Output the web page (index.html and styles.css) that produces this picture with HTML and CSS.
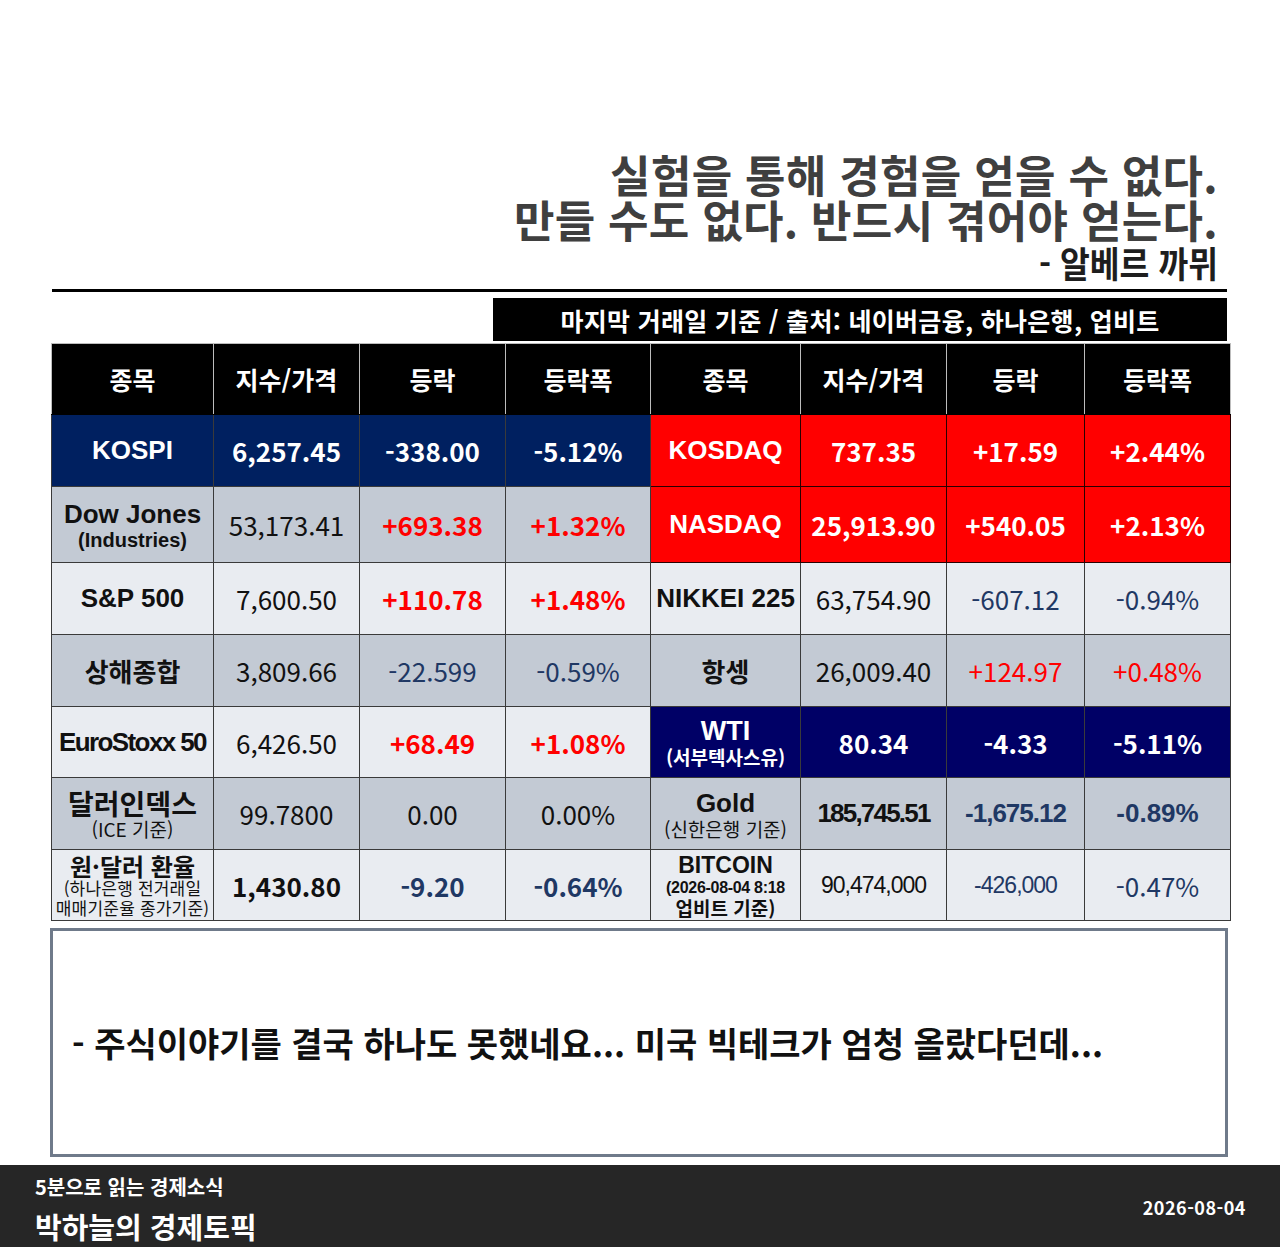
FILE: index.html
```html
<!DOCTYPE html>
<html lang="ko">
<head>
<meta charset="utf-8">
<title>박하늘의 경제토픽</title>
<link rel="stylesheet" href="styles.css">
</head>
<body>
<div class="main">
  <div class="quote">
    <div class="q">실험을 통해 경험을 얻을 수 없다.</div>
    <div class="q">만들 수도 없다. 반드시 겪어야 얻는다.</div>
    <div class="q author">- 알베르 까뮈</div>
  </div>
  <div class="rule"></div>
  <div class="source-row">
    <div class="source"><span class="source-text">마지막 거래일 기준 / 출처: 네이버금융, 하나은행, 업비트</span></div>
  </div>
  <table class="market">
    <colgroup>
      <col class="c1"><col class="c2"><col class="c3"><col class="c4">
      <col class="c5"><col class="c6"><col class="c7"><col class="c8">
    </colgroup>
    <thead>
      <tr class="r-head">
        <th>종목</th><th>지수/가격</th><th>등락</th><th>등락폭</th>
        <th>종목</th><th>지수/가격</th><th>등락</th><th>등락폭</th>
      </tr>
    </thead>
    <tbody>
      <tr class="r72">
        <td class="navy name-en">KOSPI</td>
        <td class="navy num b">6,257.45</td>
        <td class="navy num b">-338.00</td>
        <td class="navy num b">-5.12%</td>
        <td class="red name-en">KOSDAQ</td>
        <td class="red num b">737.35</td>
        <td class="red num b">+17.59</td>
        <td class="red num b">+2.44%</td>
      </tr>
      <tr class="r76">
        <td class="gray name-en"><div class="l1">Dow Jones</div><div class="l2 en-sub">(Industries)</div></td>
        <td class="gray num">53,173.41</td>
        <td class="gray num b up">+693.38</td>
        <td class="gray num b up">+1.32%</td>
        <td class="red name-en">NASDAQ</td>
        <td class="red num b">25,913.90</td>
        <td class="red num b">+540.05</td>
        <td class="red num b">+2.13%</td>
      </tr>
      <tr class="r72">
        <td class="light name-en">S&amp;P 500</td>
        <td class="light num">7,600.50</td>
        <td class="light num b up">+110.78</td>
        <td class="light num b up">+1.48%</td>
        <td class="light name-en">NIKKEI 225</td>
        <td class="light num">63,754.90</td>
        <td class="light num down">-607.12</td>
        <td class="light num down">-0.94%</td>
      </tr>
      <tr class="r72">
        <td class="gray name-ko">상해종합</td>
        <td class="gray num">3,809.66</td>
        <td class="gray num down">-22.599</td>
        <td class="gray num down">-0.59%</td>
        <td class="gray name-ko">항셍</td>
        <td class="gray num">26,009.40</td>
        <td class="gray num up">+124.97</td>
        <td class="gray num up">+0.48%</td>
      </tr>
      <tr class="r71">
        <td class="light name-en narrow">EuroStoxx 50</td>
        <td class="light num">6,426.50</td>
        <td class="light num b up">+68.49</td>
        <td class="light num b up">+1.08%</td>
        <td class="navy2 name-en"><div class="l1 wti">WTI</div><div class="l2 ko-sub b">(서부텍사스유)</div></td>
        <td class="navy2 num b">80.34</td>
        <td class="navy2 num b">-4.33</td>
        <td class="navy2 num b">-5.11%</td>
      </tr>
      <tr class="r72">
        <td class="gray"><div class="l1 name-ko big">달러인덱스</div><div class="l2 ko-sub small">(ICE 기준)</div></td>
        <td class="gray num">99.7800</td>
        <td class="gray num">0.00</td>
        <td class="gray num">0.00%</td>
        <td class="gray"><div class="l1 name-en">Gold</div><div class="l2 ko-sub">(신한은행 기준)</div></td>
        <td class="gray arial b cond2">185,745.51</td>
        <td class="gray arial b cond1 down">-1,675.12</td>
        <td class="gray arial b down">-0.89%</td>
      </tr>
      <tr class="r71">
        <td class="light"><div class="m1 name-ko">원·달러 환율</div><div class="m2">(하나은행 전거래일</div><div class="m3">매매기준율 종가기준)</div></td>
        <td class="light num b">1,430.80</td>
        <td class="light num b down">-9.20</td>
        <td class="light num b down">-0.64%</td>
        <td class="light"><div class="m1 btc">BITCOIN</div><div class="m2 btc-date">(2026-08-04 8:18</div><div class="m3 btc-src">업비트 기준)</div></td>
        <td class="light arial-r">90,474,000</td>
        <td class="light arial-r down">-426,000</td>
        <td class="light num down">-0.47%</td>
      </tr>
    </tbody>
  </table>
  <div class="memo">
    <p class="memo-text">- 주식이야기를 결국 하나도 못했네요... 미국 빅테크가 엄청 올랐다던데...</p>
  </div>
</div>
<footer class="footer">
  <div class="brand">
    <div class="brand-sub">5분으로 읽는 경제소식</div>
    <div class="brand-title">박하늘의 경제토픽</div>
  </div>
  <div class="date">2026-08-04</div>
</footer>
</body>
</html>
```
FILE: styles.css
```css
* { box-sizing: border-box; }
html, body { margin: 0; padding: 0; }
body {
  width: 1280px;
  height: 1247px;
  background: #ffffff;
  font-family: "Noto Sans CJK KR", "Noto Sans", sans-serif;
  color: #111;
  overflow: hidden;
}

.main {
  padding-left: 51px;
  width: 1230px;
}

/* Quote */
.quote {
  display: flex;
  flex-direction: column;
  align-items: flex-end;
  padding-top: 152px;
  padding-right: 12px;
}
.q {
  font-size: 44px;
  line-height: 45px;
  height: 45px;
  font-weight: 700;
  color: #3f3f3f;
  white-space: nowrap;
  letter-spacing: 0.3px;
}
.q.author {
  font-size: 36px;
  line-height: 40px;
  height: 40px;
  color: #1e1e1e;
  letter-spacing: 0;
  transform: scaleX(0.9);
  transform-origin: right center;
}

.rule {
  margin-top: 7px;
  margin-left: 1px;
  width: 1175px;
  height: 3px;
  background: #000;
}

.source-row {
  margin-top: 6px;
  padding-left: 442px;
}
.source {
  width: 734px;
  height: 43px;
  background: #000;
  display: flex;
  align-items: center;
  justify-content: center;
}
.source-text {
  display: inline-block;
  color: #fff;
  font-size: 25px;
  font-weight: 700;
  white-space: nowrap;
  letter-spacing: 0.3px;
}

/* Table */
.market {
  width: 1179px;
  table-layout: fixed;
  border-collapse: collapse;
  margin: 2px 0 0 0;
}
.c1 { width: 162px; }
.c2 { width: 146px; }
.c3 { width: 146px; }
.c4 { width: 145px; }
.c5 { width: 150px; }
.c6 { width: 146px; }
.c7 { width: 138px; }
.c8 { width: 146px; }

.market th,
.market td {
  padding: 0;
  text-align: center;
  vertical-align: middle;
  white-space: nowrap;
  overflow: visible;
  border: 1px solid #3a3a3a;
}
.market th {
  background: #000;
  color: #fff;
  font-size: 25px;
  font-weight: 700;
  border-color: #bdbdbd;
  border-bottom-color: #000;
}
.r-head { height: 71px; }
.r71 { height: 71px; }
.r72 { height: 72px; }
.r76 { height: 76px; }

.navy { background: #002060; color: #fff; }
.navy2 { background: #000066; color: #fff; }
.red { background: #ff0000; color: #fff; }
.gray { background: #c3cad4; }
.light { background: #e9ecf1; }
.market td.red { border-color: #2a0000; }

.num {
  font-size: 26px;
  font-weight: 400;
  letter-spacing: 0;
}
.b { font-weight: 700; }
.up { color: #ff0000; }
.down { color: #1f3864; }

.name-en {
  font-family: "Liberation Sans", Arial, sans-serif;
  font-size: 26px;
  font-weight: 700;
}
.name-en.narrow { letter-spacing: -1.6px; }
.name-ko {
  font-family: "Noto Sans CJK KR", sans-serif;
  font-size: 26px;
  font-weight: 700;
}
.name-ko.big { font-size: 28px; }

.arial {
  font-family: "Liberation Sans", Arial, sans-serif;
  font-size: 26px;
}
.cond2 { letter-spacing: -1.8px; }
.cond1 { letter-spacing: -1px; }
.arial-r {
  font-family: "Liberation Sans", Arial, sans-serif;
  font-size: 23px;
  letter-spacing: -1px;
}

.l1 { line-height: 30px; height: 30px; }
.l2 { line-height: 22px; height: 22px; }
.en-sub {
  font-family: "Liberation Sans", Arial, sans-serif;
  font-size: 20px;
  font-weight: 700;
}
.ko-sub {
  font-family: "Noto Sans CJK KR", sans-serif;
  font-size: 19px;
  font-weight: 400;
}
.ko-sub.b { font-weight: 700; font-size: 19px; }
.ko-sub.small { font-size: 19px; }
.wti { font-size: 27px; }

.m1 { line-height: 25px; height: 25px; font-size: 24px; }
.m2, .m3 {
  line-height: 20px;
  height: 20px;
  font-size: 17px;
  letter-spacing: 0.2px;
  font-family: "Noto Sans CJK KR", sans-serif;
}
.btc {
  font-family: "Liberation Sans", Arial, sans-serif;
  font-size: 23px;
  font-weight: 700;
}
.btc-date {
  font-family: "Liberation Sans", Arial, sans-serif;
  font-size: 16px;
  font-weight: 700;
  letter-spacing: -0.3px;
}
.btc-src {
  font-size: 19px;
  font-weight: 700;
  letter-spacing: 0;
}

/* Memo */
.memo {
  margin-top: 7px;
  margin-left: -1px;
  width: 1178px;
  height: 229px;
  border: 3px solid #6f7a8a;
  display: flex;
  align-items: center;
  padding-left: 19px;
}
.memo-text {
  margin: 0;
  font-size: 34px;
  font-weight: 700;
  color: #111;
  white-space: nowrap;
}

/* Footer */
.footer {
  margin-top: 8px;
  height: 83px;
  background: #262626;
  color: #fff;
  display: flex;
  justify-content: space-between;
  align-items: center;
  padding: 0 34px 0 35px;
}
.brand {
  display: flex;
  flex-direction: column;
  align-self: flex-start;
  padding-top: 9px;
}
.brand-sub {
  font-size: 20px;
  line-height: 26px;
  font-weight: 700;
}
.brand-title {
  margin-top: 7px;
  font-size: 29px;
  line-height: 38px;
  font-weight: 700;
}
.date {
  font-size: 18px;
  font-weight: 700;
  letter-spacing: 0.5px;
}
```
